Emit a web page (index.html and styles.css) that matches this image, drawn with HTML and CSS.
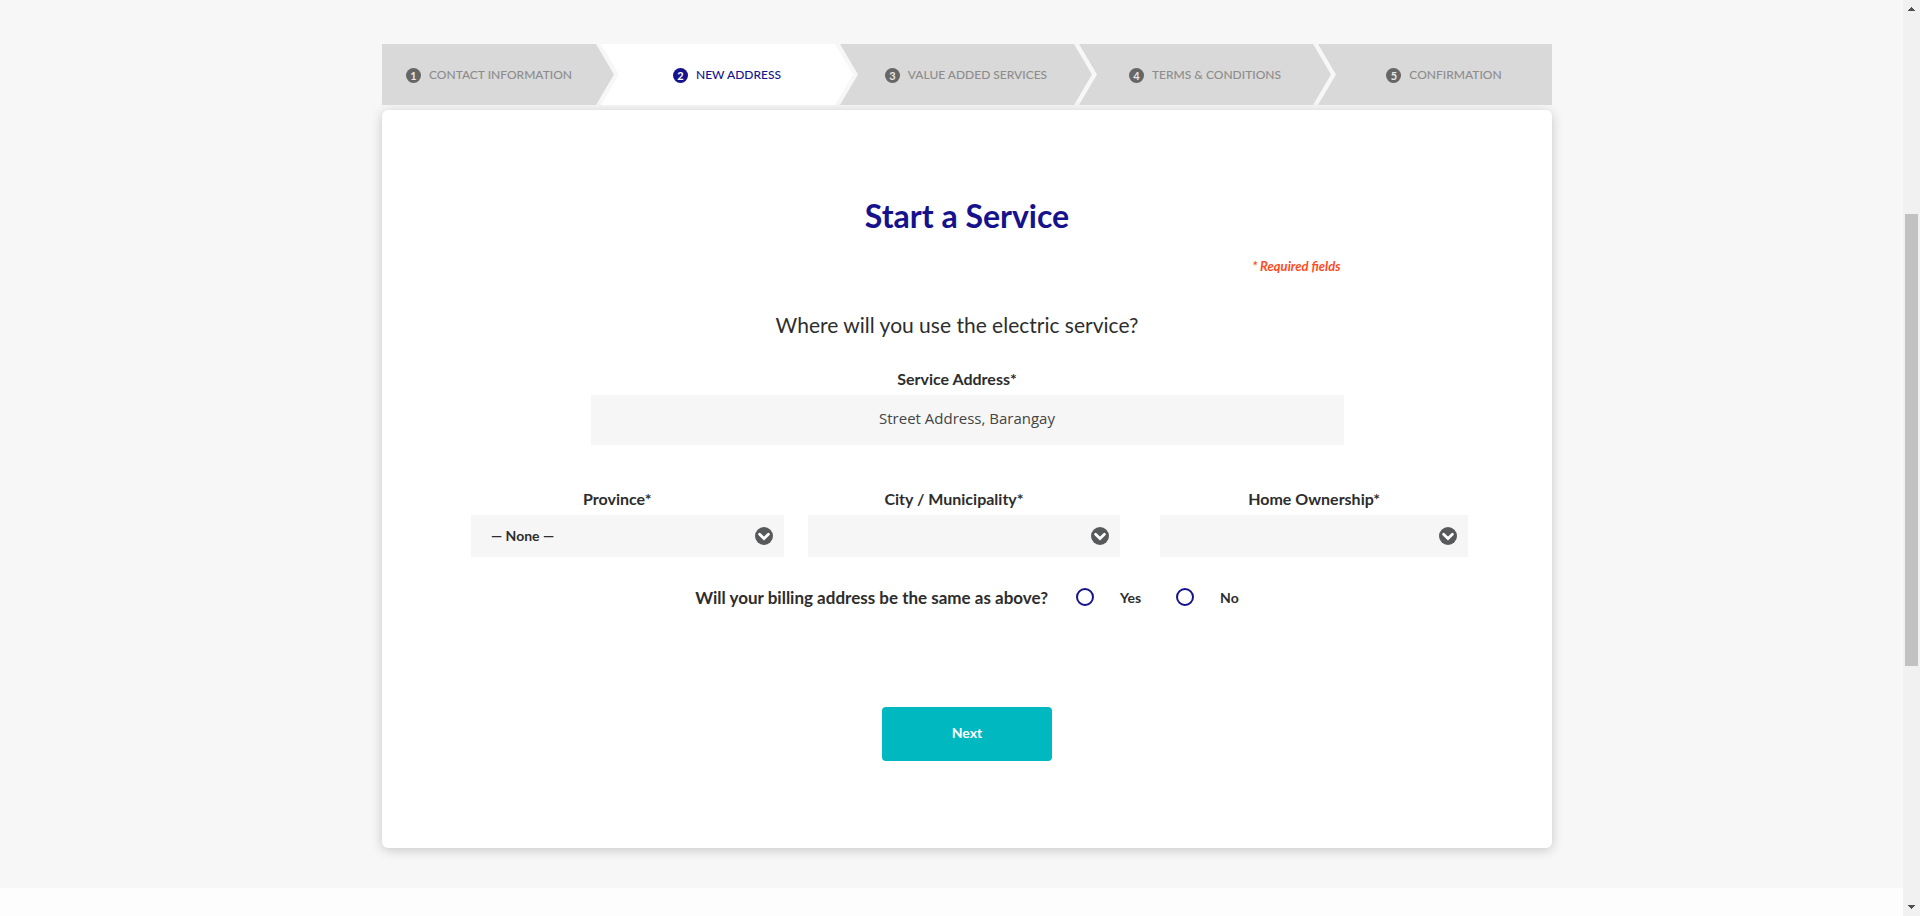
FILE: index.html
```
<!DOCTYPE html>
<html lang="en">
<head>
<meta charset="utf-8">
<meta name="viewport" content="width=device-width, initial-scale=1">
<title>Start a Service</title>
<link rel="stylesheet" href="styles.css">
</head>
<body>
<svg class="defs" aria-hidden="true">
  <symbol id="chevron" viewBox="0 0 18 18">
    <circle cx="9" cy="9" r="9" fill="#58595b"/>
    <path d="M4.6 7.3 9 11.5l4.4-4.2" fill="none" stroke="#fff" stroke-width="2.8" stroke-linecap="round"/>
  </symbol>
</svg>
<div class="page">
  <main class="content">
    <div class="container">
      <ol class="steps">
        <li class="step step-first"><span class="num">1</span>CONTACT INFORMATION</li>
        <li class="step step-active" aria-current="step"><span class="num">2</span>NEW ADDRESS</li>
        <li class="step"><span class="num">3</span>VALUE ADDED SERVICES</li>
        <li class="step"><span class="num">4</span>TERMS &amp; CONDITIONS</li>
        <li class="step step-last"><span class="num">5</span>CONFIRMATION</li>
      </ol>
      <form class="card">
        <h1 class="title">Start a Service</h1>
        <p class="required">* Required fields</p>
        <h2 class="question">Where will you use the electric service?</h2>
        <div class="address">
          <label class="label" for="address">Service Address*</label>
          <input class="text-input" id="address" type="text" placeholder="Street Address, Barangay">
        </div>
        <div class="selects">
          <div class="field">
            <label class="label" for="province">Province*</label>
            <div class="select-box">
              <select class="select" id="province"><option>— None —</option></select>
              <svg class="chevron" aria-hidden="true"><use href="#chevron"/></svg>
            </div>
          </div>
          <div class="field">
            <label class="label" for="city">City / Municipality*</label>
            <div class="select-box">
              <select class="select" id="city"><option></option></select>
              <svg class="chevron" aria-hidden="true"><use href="#chevron"/></svg>
            </div>
          </div>
          <div class="field field-home">
            <label class="label" for="home">Home Ownership*</label>
            <div class="select-box">
              <select class="select" id="home"><option></option></select>
              <svg class="chevron" aria-hidden="true"><use href="#chevron"/></svg>
            </div>
          </div>
        </div>
        <fieldset class="billing" aria-labelledby="billing-text">
          <div class="billing-row">
            <span class="billing-text" id="billing-text">Will your billing address be the same as above?</span>
            <label class="choice"><input class="radio" type="radio" name="same">Yes</label>
            <label class="choice"><input class="radio" type="radio" name="same">No</label>
          </div>
        </fieldset>
        <button class="next" type="button">Next</button>
      </form>
    </div>
  </main>
  <div class="scrollbar" aria-hidden="true">
    <svg class="arrow" viewBox="0 0 7 4"><path d="M3 0h1v1h1v1h1v1h1v1H0V3h1V2h1V1h1z"/></svg>
    <div class="track"><div class="thumb"></div></div>
    <svg class="arrow" viewBox="0 0 7 4"><path d="M0 0h7v1H6v1H5v1H4v1H3V3H2V2H1V1H0z"/></svg>
  </div>
</div>
</body>
</html>
```
FILE: styles.css
```
* { box-sizing: border-box; }

body {
  margin: 0;
  background: #fdfdfd;
  color: #2d2d2d;
  font-family: Lato, "Open Sans", sans-serif;
}

.defs { position: absolute; width: 0; height: 0; }

.page {
  display: flex;
  align-items: flex-start;
  min-height: 100vh;
}

.content {
  flex: 1;
  padding: 44px 0 40px 31px;
  background: #f7f7f7;
}

.container { max-width: 1170px; margin: 0 auto; }

.steps {
  display: flex;
  margin: 0 0 5px;
  padding: 0;
  list-style: none;
}

.step {
  display: flex;
  flex: 1 1 252px;
  align-items: center;
  justify-content: center;
  gap: 8px;
  height: 61px;
  background: #d9d9d9;
  color: #8c8c8c;
  font-size: 12px;
  font-weight: 500;
  white-space: nowrap;
  clip-path: polygon(0 0, calc(100% - 18px) 0, 100% 50%, calc(100% - 18px) 100%, 0 100%, 18px 50%);
}

.step + .step { margin-left: -13px; }

.step-first {
  flex-basis: 232px;
  padding-right: 18px;
  clip-path: polygon(0 0, calc(100% - 18px) 0, 100% 50%, calc(100% - 18px) 100%, 0 100%);
}

.step-last {
  flex-basis: 234px;
  padding-left: 18px;
  clip-path: polygon(0 0, 100% 0, 100% 100%, 0 100%, 18px 50%);
}

.step-active { background: #fff; }
.step-active { color: #15128c; }

.num {
  display: flex;
  align-items: center;
  justify-content: center;
  width: 15px;
  height: 15px;
  margin-top: 2px;
  border-radius: 50%;
  background: #666;
  color: #e6e6e6;
  font-size: 11px;
  font-weight: 700;
  line-height: 15px;
}

.step-active .num { background: #15128c; color: #fff; }

.card {
  display: flex;
  flex-direction: column;
  align-items: center;
  padding: 86px 84px 87px;
  border-radius: 6px;
  background: #fff;
  box-shadow: 0 2px 12px rgba(0, 0, 0, 0.2);
}

.title {
  margin: 0;
  color: #15128c;
  font-size: 32px;
  font-weight: 700;
  line-height: 40px;
}

.required {
  width: 100%;
  max-width: 753px;
  margin: 20px 0 0;
  padding-right: 3px;
  color: #ff4a1c;
  font-size: 13px;
  font-style: italic;
  font-weight: 700;
  line-height: 20px;
  text-align: right;
}

.question {
  margin: 35px 0 0;
  padding-right: 20px;
  font-size: 21px;
  font-weight: 400;
  line-height: 28px;
}

.address { width: 100%; max-width: 753px; margin-top: 28px; }

.label {
  display: block;
  padding-right: 20px;
  font-size: 16px;
  font-weight: 700;
  line-height: 24px;
  text-align: center;
}

.text-input {
  display: block;
  width: 100%;
  height: 50px;
  margin-top: 4px;
  padding: 0 16px 4px;
  border: 0;
  background: #f6f6f6;
  color: #2d2d2d;
  font: 400 15px "Open Sans", sans-serif;
  text-align: center;
}

.text-input::placeholder { color: #444; opacity: 1; }

.selects { display: flex; width: 100%; margin-top: 42px; padding-left: 5px; }

.field { flex: 313 1 0; margin-right: 24px; }

.field-home { flex-grow: 308; margin: 0 0 0 16px; }

.field-home .label { padding-right: 0; }

.select-box { position: relative; margin-top: 4px; }

.select {
  display: block;
  width: 100%;
  height: 42px;
  padding: 0 40px 2px 20px;
  border: 0;
  border-radius: 0;
  background: #f6f6f6;
  color: #2d2d2d;
  font: 700 14px Lato, sans-serif;
  appearance: none;
}

.chevron {
  position: absolute;
  top: 12px;
  right: 11px;
  width: 18px;
  height: 18px;
  pointer-events: none;
}

.billing { margin: 25px 0 0; padding: 0; border: 0; }

.billing-row { display: flex; align-items: center; height: 30px; }

.billing-text { margin-right: 28px; font-size: 17px; font-weight: 700; }

.choice {
  display: flex;
  align-items: center;
  gap: 26px;
  font-size: 14px;
  font-weight: 700;
}

.choice + .choice { margin-left: 35px; }

.radio {
  width: 18px;
  height: 18px;
  margin: 0;
  border: 2px solid #15128c;
  border-radius: 50%;
  appearance: none;
}

.radio:checked { background: #15128c; box-shadow: inset 0 0 0 3px #fff; }

.next {
  width: 170px;
  height: 54px;
  margin-top: 95px;
  padding: 0 0 3px;
  border: 0;
  border-radius: 4px;
  background: #00b8c0;
  color: #fff;
  font: 700 14px Lato, sans-serif;
}

.scrollbar {
  display: flex;
  flex-direction: column;
  align-items: center;
  width: 17px;
  height: 100vh;
  padding: 7px 0;
  background: #f1f1f1;
}

.arrow { width: 7px; height: 4px; fill: #505050; shape-rendering: crispEdges; }

.track { flex: 1; width: 13px; padding: 203px 0 0; }

.thumb { height: 452px; background: #c1c1c1; }
```
